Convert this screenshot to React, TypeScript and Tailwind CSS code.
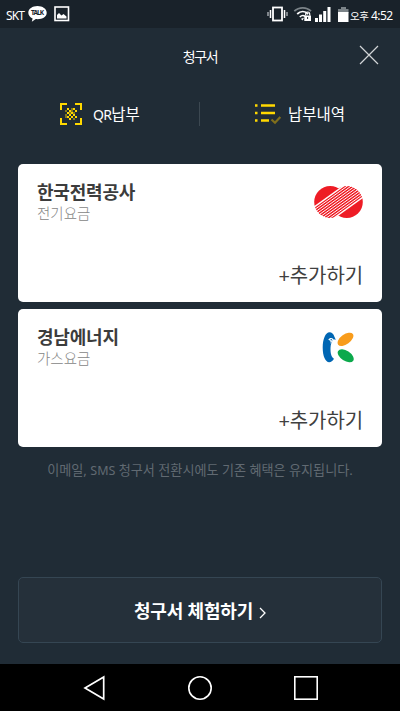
import type { ReactNode } from 'react'

interface Bill {
  company: string;
  type: string;
  logo: ReactNode;
}

function KepcoLogo() {
  return (
    <svg width="49" height="32" viewBox="0 0 49 32">
      <circle cx="16.2" cy="16" r="16" fill="#ee1c25" />
      <circle cx="32.8" cy="16" r="16" fill="#ee1c25" />
      {/* White diagonal lines across both circles */}
      {[21.2, 24, 26.8, 29.6, 32.4, 35.2, 38, 40.8, 43.6, 46.4].map((y, i) => (
        <line
          key={y}
          x1="0"
          y1={y}
          x2="50"
          y2={y - 36}
          stroke="#fff"
          strokeWidth={i === 0 || i === 9 ? 1.4 : 1}
        />
      ))}
    </svg>
  );
}

function GasLogo() {
  return (
    <svg className="mr-[2px]" width="32" height="32" viewBox="0 0 32 32">
      <path
        d="M7.5 1.2C9.7 1.2 11.8 3 12.2 5.2L13.8 8.8L11.5 8.3C9.7 10.5 8.6 13.5 8.5 17C8.4 22 9.2 26 12 27.8C10.8 30 9 31.2 7.2 31.2C3.4 31.2.7 25 .7 16.5C.7 8 3.6 1.2 7.5 1.2Z"
        fill="#0066b3"
      />
      <path d="M6.3 8.8C7.4 6.8 9.8 6.5 11.5 8.3C10.1 10 9.3 11.4 8.8 13C8.9 10.6 8 9.2 6.3 8.8Z" fill="#fff" />
      <circle cx="9.2" cy="8.8" r="0.8" fill="#0066b3" />
      <ellipse cx="23.5" cy="8.3" rx="9.1" ry="4.9" transform="rotate(-36 23.5 8.3)" fill="#f89c1c" />
      <ellipse cx="23.7" cy="24.8" rx="9" ry="5" transform="rotate(33 23.7 24.8)" fill="#0ca94c" />
    </svg>
  );
}

const bills: Bill[] = [
  { company: '한국전력공사', type: '전기요금', logo: <KepcoLogo /> },
  { company: '경남에너지', type: '가스요금', logo: <GasLogo /> },
];

function StatusBar() {
  return (
    <div className="flex h-7 items-center bg-[#19222a] text-white">
      <span className="ml-[6px] mt-[4px] w-[22px] text-[12px] leading-4 tracking-[-0.9px]">SKT</span>
      <svg className="shrink-0" width="19" height="20" viewBox="0 0 19 20">
        <path d="M9.5 2C4.5 2 .3 4.8.3 8.7c0 2.5 1.7 4.6 4.3 5.7l-.8 3.4 4-2.7c6 .6 10.9-2.1 10.9-6.4C18.7 4.8 14.5 2 9.5 2Z" fill="#fff" />
        <text x="9.5" y="11.3" textAnchor="middle" textLength="13" fontSize="6.5" fontWeight="700" fill="#19222a">TALK</text>
      </svg>
      <svg className="ml-[7px] shrink-0" width="16" height="16" viewBox="0 0 16 16">
        <rect x="1" y="1" width="13.5" height="13.5" fill="none" stroke="#fff" strokeWidth="1.6" />
        <path d="M3 12.5V9l2-2 2.5 2.5L9.5 8l3 2.5v2Z" fill="#fff" />
      </svg>

      <div className="ml-auto flex items-center pr-[7px]">
        <svg width="22" height="18" viewBox="0 0 22 18" fill="none" stroke="#fff">
          <rect x="6" y="2.5" width="9" height="13" strokeWidth="1.8" />
          <path d="M3.5 5v8M17.5 5v8" strokeWidth="1.5" />
          <path d="M1 7v4M20 7v4" stroke="#b5bbbf" strokeWidth="1.3" />
        </svg>
        <svg className="ml-1" width="20" height="18" viewBox="0 0 20 18" fill="none">
          <path d="M1.3 6.2C6 1.7 13.5 1.7 18 6.2" stroke="#7b8388" strokeWidth="1.8" />
          <path d="M4.2 9C7.6 5.8 12 5.8 15.2 9" stroke="#fff" strokeWidth="1.8" />
          <path d="M6.8 12C8.8 10.1 10.5 10.1 12 11.3" stroke="#fff" strokeWidth="1.6" />
          <path d="M9.5 15.5L8 13.8l3-1Z" fill="#fff" />
          <path d="M12.7 10.5V9a2 2 0 0 1 4 0v1.5" stroke="#fff" strokeWidth="1.2" />
          <rect x="11.3" y="10.5" width="6.7" height="5.5" fill="#fff" />
          <path d="M14.6 12v2" stroke="#19222a" />
        </svg>
        <svg className="ml-[2px]" width="16" height="18" viewBox="0 0 16 18" fill="#fff">
          <rect x="0" y="13" width="3" height="4" />
          <rect x="4" y="9.5" width="3" height="7.5" />
          <rect x="8.2" y="6" width="3" height="11" />
          <rect x="12.5" y="2" width="3" height="15" />
        </svg>
        <svg className="ml-[7px] mt-[1px]" width="11" height="18" viewBox="0 0 11 18">
          <path d="M3 1h5v2h2.5v4H0V3h3Z" fill="#7b8388" />
          <rect x="0" y="6" width="10.5" height="10" fill="#fff" />
        </svg>
        <span className="ml-[1px] mt-[3px] w-[20px] text-[10.5px] leading-4 tracking-[-0.4px]">오후</span>
        <span className="ml-[1px] mt-[3px] w-[22px] text-[12px] leading-4 tracking-[-0.6px]">4:52</span>
      </div>
    </div>
  );
}

function QrIcon() {
  return (
    <svg width="22" height="22" viewBox="0 0 22 22">
      <path d="M1 7V1h6M15 1h6v6M21 15v6h-6M7 21H1v-6" fill="none" stroke="#ffd800" strokeWidth="2" />
      <g fill="#ffd800">
        <path d="M7 5h2v2H7ZM13 5h2v2h-2ZM9 7h2v2H9ZM11 9h2v2h-2ZM15 7h2v2h-2ZM7 9h2v2H7ZM9 11h2v2H9ZM13 11h2v2h-2ZM7 13h2v2H7ZM11 13h2v2h-2ZM15 13h2v2h-2ZM9 15h2v2H9Z" />
        <path d="M5 7h2v2H5ZM5 13h2v2H5ZM11 7h2v2h-2ZM13 9h2v2h-2ZM5 11h2v2H5ZM11 5h2v2h-2ZM13 15h2v2h-2ZM9 9h2v2H9Z" opacity=".45" />
      </g>
    </svg>
  );
}

function ListIcon() {
  return (
    <svg width="27" height="22" viewBox="0 0 27 22" fill="none">
      <path d="M0 2.5h2.5M6 2.5h14M0 10h2.5M6 10h14M0 17.5h2.5M6 17.5h8" stroke="#ffd800" strokeWidth="2.3" />
      <path d="M16.5 16.5l3.5 3.3L25.3 14" stroke="#806f1c" strokeWidth="2.2" />
    </svg>
  );
}

function BillCard({ company, type, logo }: Bill) {
  return (
    <div className="flex h-[138px] flex-col justify-between rounded-[5px] bg-white px-[19px]">
      <div className="flex items-start justify-between">
        <div className="pt-[17px]">
          <div className="text-[18px] font-bold leading-[22px] tracking-[-0.2px] text-[#3c3c3c]">{company}</div>
          <div className="text-[14.5px] font-light leading-[20px] text-[#858585]">{type}</div>
        </div>
        <div className="mt-[22px] flex h-8 w-[49px] items-center justify-center">{logo}</div>
      </div>
      <button className="mb-[12px] self-end text-[20px] leading-7 tracking-[-0.1px] text-[#404040]">+추가하기</button>
    </div>
  );
}

export default function App() {
  return (
    <div className="flex h-[711px] w-[400px] flex-col overflow-hidden bg-[#202c36] font-['Noto_Sans','Noto_Sans_CJK_KR',sans-serif]">
      <StatusBar />

      <header className="grid h-[54px] grid-cols-[1fr_auto_1fr] items-center text-white">
        <span />
        <h1 className="mt-1 text-[14px] leading-5 tracking-[-1.4px]">청구서</h1>
        <button className="mr-[21px] justify-self-end">
          <svg width="20" height="20" viewBox="0 0 20 20">
            <path d="M1 1l18 18M19 1L1 19" stroke="#d2d5d7" strokeWidth="1.2" />
          </svg>
        </button>
      </header>

      <nav className="flex h-[63px] items-center text-[15.5px] leading-6 text-white">
        <button className="flex w-[199px] items-center gap-[11px] pl-[60px]">
          <QrIcon />
          <span className="pt-[2px]">
            <span className="text-[14px] tracking-[-0.7px]">QR</span>납부
          </span>
        </button>
        <span className="h-6 w-px bg-[#3c4851]" />
        <button className="flex items-center gap-[6px] pl-[55px]">
          <ListIcon />
          <span>납부내역</span>
        </button>
      </nav>

      <main className="flex flex-1 flex-col px-[18px] pt-[19px]">
        <div className="flex flex-col gap-[7px]">
          {bills.map(bill => (
            <BillCard key={bill.company} {...bill} />
          ))}
        </div>
        <p className="mt-[13px] whitespace-nowrap text-center text-[13.1px] leading-5 text-[#616a72]">
          이메일, <span className="text-[12.5px]">SMS</span> 청구서 전환시에도 기존 혜택은 유지됩니다.
        </p>
        <button className="mb-[21px] mt-auto flex h-[66px] items-center justify-center gap-[6px] rounded-[5px] border border-[#354653] bg-[#25303a] pt-[2px] text-[18px] font-bold tracking-[-0.2px] text-white">
          청구서 체험하기
          <svg className="mt-[3px]" width="7" height="12" viewBox="0 0 7 12" fill="none">
            <path d="M1 1l5 5-5 5" stroke="#fff" strokeWidth="1.3" />
          </svg>
        </button>
      </main>

      <div className="flex h-[47px] items-center justify-between bg-black pl-[82px] pr-[81px]">
        <svg width="24" height="26" viewBox="0 0 24 26" fill="none">
          <path d="M21.7 2v22L3 13Z" stroke="#fff" strokeWidth="1.7" />
        </svg>
        <svg width="26" height="26" viewBox="0 0 26 26" fill="none">
          <circle cx="13" cy="13" r="11.2" stroke="#fff" strokeWidth="1.6" />
        </svg>
        <svg width="26" height="26" viewBox="0 0 26 26" fill="none">
          <rect x="1.8" y="1.8" width="22.4" height="22.4" stroke="#fff" strokeWidth="1.6" />
        </svg>
      </div>
    </div>
  );
}
